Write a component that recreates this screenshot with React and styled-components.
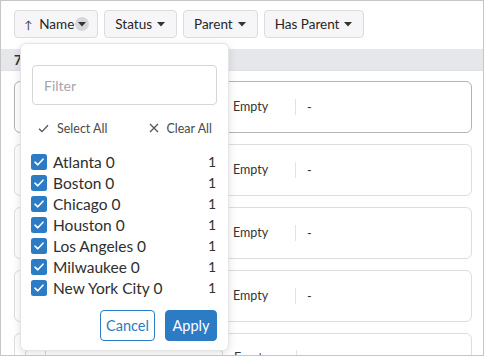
import React from "react";
import styled, { createGlobalStyle } from "styled-components";

const Global = createGlobalStyle`
  html, body { margin: 0; padding: 0; background: #ffffff; }
  body { font-family: Lato, "Noto Sans", sans-serif; color: #333; }
  * { box-sizing: border-box; }
`;

const Frame = styled.div`
  position: relative;
  width: 484px;
  height: 356px;
  border: 1px solid #c6c6c6;
  overflow: hidden;
  background: #fff;
`;

const Toolbar = styled.div`
  display: flex;
  gap: 6px;
  padding: 9px 13px 11px;
`;

const ToolButton = styled.div`
  display: flex;
  align-items: center;
  height: 28px;
  padding: 0 ${(p) => (p.$sorted ? "8px" : "11px")} 0 ${(p) => (p.$sorted ? "9px" : "10px")};
  gap: 5px;
  background: #f6f6f8;
  border: 1px solid #dcdcdf;
  border-radius: 4px;
  font-size: 13.5px;
  color: #262626;
`;

const SortArrow = styled.span`
  font-size: 11px;
  margin-right: 2px;
  color: #333;
`;

const CaretWrap = styled.span`
  display: inline-flex;
  align-items: center;
  justify-content: center;
  width: ${(p) => (p.$active ? "14px" : "8px")};
  height: ${(p) => (p.$active ? "14px" : "8px")};
  border-radius: 50%;
  background: ${(p) => (p.$active ? "#d6d7db" : "transparent")};
  margin-left: ${(p) => (p.$active ? "-4px" : "0")};
`;

const Caret = () => (
  <svg width="8" height="5" viewBox="0 0 8 5">
    <path d="M0 0 L8 0 L4 4.5 Z" fill="#333" />
  </svg>
);

const HeaderBand = styled.div`
  height: 22px;
  background: #e6e7eb;
  border-bottom: 1px solid #dfe0e4;
  display: flex;
  align-items: center;
  padding-left: 13px;
  font-weight: 700;
  font-size: 13px;
  color: #333;
`;

const List = styled.div`
  display: flex;
  flex-direction: column;
  gap: 11px;
  padding: 10px 11px 0 13px;
`;

const Card = styled.div`
  height: 52px;
  flex: none;
  border: 1px solid ${(p) => (p.$hover ? "#b4b4b8" : "#dcdde0")};
  border-radius: 6px;
  background: #fff;
  display: flex;
  align-items: ${(p) => (p.$group ? "flex-start" : "center")};
  padding: ${(p) => (p.$group ? "16px 0 0 10px" : "0")};
  font-size: 12.5px;
  color: #333;
`;

const NameCell = styled.div`
  width: 218px;
  flex: none;
`;

const GroupBox = styled.div`
  width: 198px;
  height: 40px;
  flex: none;
  display: flex;
  border: 1px solid #d4d5d8;
  border-radius: 3px;
`;

const GroupHandle = styled.div`
  width: 20px;
  border-right: 1px solid #d4d5d8;
`;

const GroupName = styled.div`
  padding: 1px 0 0 11px;
  font-size: 15px;
`;

const StatusCell = styled.div`
  width: 63px;
  flex: none;
  padding-right: 8px;
  border-right: 1px solid #e2e3e6;
  line-height: 16px;
  margin-left: ${(p) => (p.$group ? "11px" : "0")};
`;

const ValueCell = styled.div`
  padding-left: 11px;
`;

const Popup = styled.div`
  position: absolute;
  left: 19px;
  top: 42px;
  width: 209px;
  height: 308px;
  background: #fff;
  border: 1px solid #e4e4e7;
  border-radius: 6px;
  box-shadow: 0 2px 8px rgba(0, 0, 0, 0.12);
  padding: 21px 11px 9px 11px;
  display: flex;
  flex-direction: column;
`;

const FilterInput = styled.input`
  height: 40px;
  width: 100%;
  border: 1px solid #d6d6d9;
  border-radius: 4px;
  padding: 0 11px;
  font-family: inherit;
  font-size: 14px;
  color: #333;
  outline: none;
  &::placeholder { color: #a6a6a9; }
`;

const BulkRow = styled.div`
  display: flex;
  justify-content: space-between;
  align-items: center;
  height: 18px;
  margin-top: 14px;
  padding: 0 5px 0 6px;
  font-size: 12.5px;
  color: #4a4a4a;
`;

const BulkAction = styled.div`
  display: flex;
  align-items: center;
  gap: ${(p) => p.$gap || "8px"};
`;

const Options = styled.div`
  display: flex;
  flex-direction: column;
  margin-top: 14px;
`;

const Option = styled.label`
  display: flex;
  align-items: center;
  height: 21px;
  font-size: 15.5px;
  color: #2e2e2e;
`;

const Box = styled.span`
  width: 16px;
  height: 16px;
  border-radius: 2.5px;
  background: #2b7bc5;
  display: inline-flex;
  align-items: center;
  justify-content: center;
  flex: none;
  margin-left: -1px;
  margin-right: 6px;
`;

const OptionLabel = styled.span`
  flex: 1;
`;

const Count = styled.span`
  font-size: 14px;
  color: #333;
  padding-right: 1px;
`;

const Actions = styled.div`
  display: flex;
  justify-content: flex-end;
  gap: 10px;
  margin-top: auto;
`;

const Btn = styled.button`
  height: 31px;
  width: ${(p) => (p.$primary ? "52px" : "55px")};
  padding: 0;
  border-radius: 4px;
  border: 1px solid #2b7bc5;
  background: ${(p) => (p.$primary ? "#2b7bc5" : "#fff")};
  color: ${(p) => (p.$primary ? "#fff" : "#2b7bc5")};
  font-family: inherit;
  font-size: 14.5px;
`;

const cities = [
  "Atlanta 0",
  "Boston 0",
  "Chicago 0",
  "Houston 0",
  "Los Angeles 0",
  "Milwaukee 0",
  "New York City 0",
];

const Check = () => (
  <svg width="10" height="8" viewBox="0 0 10 8">
    <path d="M1 4.2 L3.8 6.8 L9 1.2" fill="none" stroke="#fff" strokeWidth="1.6" strokeLinecap="round" strokeLinejoin="round" />
  </svg>
);

export default function App() {
  return (
    <>
      <Global />
      <Frame>
        <Toolbar>
          <ToolButton $sorted>
            <SortArrow>↑</SortArrow>
            Name
            <CaretWrap $active><Caret /></CaretWrap>
          </ToolButton>
          <ToolButton>Status<CaretWrap><Caret /></CaretWrap></ToolButton>
          <ToolButton>Parent<CaretWrap><Caret /></CaretWrap></ToolButton>
          <ToolButton>Has Parent<CaretWrap><Caret /></CaretWrap></ToolButton>
        </Toolbar>
        <HeaderBand>7</HeaderBand>
        <List>
          {[0, 1, 2, 3].map((i) => (
            <Card key={i} $hover={i === 0}>
              <NameCell />
              <StatusCell>Empty</StatusCell>
              <ValueCell>-</ValueCell>
            </Card>
          ))}
          <Card $group>
            <GroupBox>
              <GroupHandle />
              <GroupName>Los Angeles</GroupName>
            </GroupBox>
            <StatusCell $group>Empty</StatusCell>
            <ValueCell>-</ValueCell>
          </Card>
        </List>
        <Popup>
          <FilterInput placeholder="Filter" />
          <BulkRow>
            <BulkAction $gap="8px">
              <svg width="11" height="9" viewBox="0 0 11 9">
                <path d="M1 4.8 L4 7.6 L10 1.2" fill="none" stroke="#555" strokeWidth="1.3" />
              </svg>
              Select All
            </BulkAction>
            <BulkAction $gap="7px">
              <svg width="10" height="10" viewBox="0 0 10 10">
                <path d="M1 1 L9 9 M9 1 L1 9" fill="none" stroke="#555" strokeWidth="1.3" />
              </svg>
              Clear All
            </BulkAction>
          </BulkRow>
          <Options>
            {cities.map((c) => (
              <Option key={c}>
                <Box><Check /></Box>
                <OptionLabel>{c}</OptionLabel>
                <Count>1</Count>
              </Option>
            ))}
          </Options>
          <Actions>
            <Btn>Cancel</Btn>
            <Btn $primary>Apply</Btn>
          </Actions>
        </Popup>
      </Frame>
    </>
  );
}
